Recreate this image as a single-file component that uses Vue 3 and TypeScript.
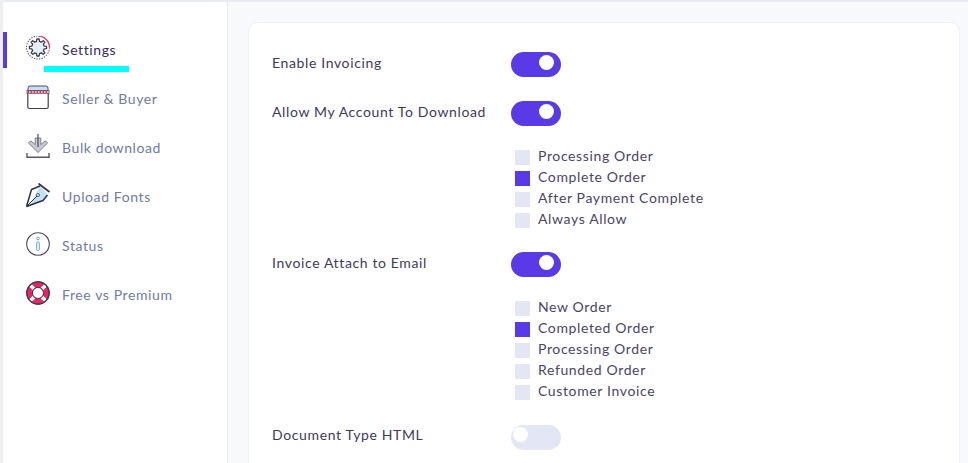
<template>
  <div class="page">
    <aside class="sidebar">
      <nav class="menu">
        <a v-for="item in menu" :key="item.key" class="menu-item" :class="{ active: item.key === 'settings' }">
          <span class="menu-icon">
            <svg v-if="item.key === 'settings'" viewBox="0 0 26 26" width="26" height="26">
              <circle cx="12" cy="11.5" r="11.5" fill="none" stroke="#55566a" stroke-width="1.1" stroke-dasharray="1.3 1.3" />
              <path d="M12 0A11.5 11.5 0 0 1 23.5 11.5" fill="none" stroke="#e8315f" stroke-width="1.2" />
              <circle cx="12" cy="11.5" r="6" fill="#e6eefb" />
              <path :d="gearPath" fill="none" stroke="#3b3b4f" stroke-width="1.3" stroke-linejoin="round" />
            </svg>
            <svg v-else-if="item.key === 'seller'" viewBox="0 0 26 26" width="26" height="26">
              <path d="M1.8 7V22a1.5 1.5 0 0 0 1.5 1.5h17.4a1.5 1.5 0 0 0 1.5-1.5V7" fill="#fff" stroke="#3f4053" stroke-width="1.2" />
              <path d="M2 5.5V3A2 2 0 0 1 4 1h16a2 2 0 0 1 2 2v2.5z" fill="#cddbf6" stroke="#3f4053" stroke-width="0.9" />
              <rect x="1" y="5.5" width="22" height="3.2" fill="#fff" stroke="#3f4053" stroke-width="0.7" />
              <path d="M1.4 7.1h21.2" stroke="#e8315f" stroke-width="2" stroke-dasharray="2 1" />
            </svg>
            <svg v-else-if="item.key === 'bulk'" viewBox="0 0 26 26" width="26" height="26">
              <path d="M9.2 4v6.5L4.6 6.8 2.4 9 12 18.5 21.6 9l-2.2-2.2-4.6 3.7V4z" fill="#c6c9d2" stroke="#6a6b7a" stroke-width="0.8" stroke-linejoin="round" />
              <path d="M12 0v13" stroke="#4a4a58" stroke-width="1.2" fill="none" />
              <path d="M1 19v4.3H23V19" fill="none" stroke="#55566a" stroke-width="1.4" />
            </svg>
            <svg v-else-if="item.key === 'fonts'" viewBox="0 0 26 26" width="26" height="26">
              <path d="M0.5 23.5 5 7 14 3l7.5 9-4.5 6z" fill="#fff" />
              <path d="M14 3 21.5 12 17 17.5 4 22.5z" fill="#bfe2f7" />
              <path d="M0.5 23.5 5.5 6.5 14 3M21.5 12 17 17.5.5 23.5" fill="none" stroke="#2f3044" stroke-width="1.5" stroke-linejoin="round" />
              <path d="M12.5 0.5 23.5 9" stroke="#2f3044" stroke-width="1.6" />
              <path d="M0.5 23.5 11 13" stroke="#2f3044" stroke-width="1" />
              <circle cx="12" cy="12" r="1.5" fill="#fff" stroke="#2f3044" stroke-width="0.8" />
            </svg>
            <svg v-else-if="item.key === 'status'" viewBox="0 0 26 26" width="26" height="26">
              <circle cx="12" cy="12" r="11.3" fill="#fff" stroke="#4a4c60" stroke-width="1.1" />
              <circle cx="12" cy="6.5" r="1.3" fill="#fff" stroke="#6d9bf0" stroke-width="1" />
              <rect x="10.7" y="10" width="2.6" height="8.5" rx="1" fill="#fff" stroke="#6d9bf0" stroke-width="1" />
            </svg>
            <svg v-else viewBox="0 0 26 26" width="26" height="26">
              <circle cx="12" cy="12" r="11.2" fill="#f5215f" stroke="#3f4053" stroke-width="1.2" />
              <path d="M4.6 4.6 8.6 8.6M19.4 4.6l-4 4M4.6 19.4l4-4M19.4 19.4l-4-4" stroke="#fff" stroke-width="3.6" />
              <circle cx="12" cy="12" r="11.2" fill="none" stroke="#3f4053" stroke-width="1.2" />
              <circle cx="12" cy="12" r="5.6" fill="#fff" stroke="#3f4053" stroke-width="1.1" />
            </svg>
          </span>
          <span class="menu-label">{{ item.label }}</span>
        </a>
      </nav>
      <div class="marker"></div>
    </aside>
    <main class="content">
      <section class="card">
        <template v-for="group in settings" :key="group.label">
          <div class="row">
            <label class="row-label">{{ group.label }}</label>
            <span class="toggle" :class="{ on: group.on }"><i></i></span>
          </div>
          <ul v-if="group.options" class="options">
            <li v-for="opt in group.options" :key="opt.label">
              <span class="box" :class="{ checked: opt.checked }"></span>{{ opt.label }}
            </li>
          </ul>
        </template>
      </section>
    </main>
  </div>
</template>

<script setup lang="ts">
interface Option {
  label: string
  checked?: boolean
}

interface Group {
  label: string
  on: boolean
  options?: Option[]
}

const menu = [
  { key: 'settings', label: 'Settings' },
  { key: 'seller', label: 'Seller & Buyer' },
  { key: 'bulk', label: 'Bulk download' },
  { key: 'fonts', label: 'Upload Fonts' },
  { key: 'status', label: 'Status' },
  { key: 'premium', label: 'Free vs Premium' }
]

const settings: Group[] = [
  { label: 'Enable Invoicing', on: true },
  {
    label: 'Allow My Account To Download',
    on: true,
    options: [
      { label: 'Processing Order' },
      { label: 'Complete Order', checked: true },
      { label: 'After Payment Complete' },
      { label: 'Always Allow' }
    ]
  },
  {
    label: 'Invoice Attach to Email',
    on: true,
    options: [
      { label: 'New Order' },
      { label: 'Completed Order', checked: true },
      { label: 'Processing Order' },
      { label: 'Refunded Order' },
      { label: 'Customer Invoice' }
    ]
  },
  { label: 'Document Type HTML', on: false }
]

// 8 teeth gear outline
function buildGear(cx: number, cy: number, outer: number, inner: number, teeth: number): string {
  const pts: string[] = []
  const step = (Math.PI * 2) / teeth
  for (let i = 0; i < teeth; i++) {
    const a = i * step
    const list: [number, number][] = [
      [inner, a - step * 0.3],
      [outer, a - step * 0.17],
      [outer, a + step * 0.17],
      [inner, a + step * 0.3]
    ]
    for (const [r, t] of list) {
      pts.push(`${(cx + r * Math.sin(t)).toFixed(2)} ${(cy - r * Math.cos(t)).toFixed(2)}`)
    }
  }
  return 'M' + pts.join('L') + 'Z'
}

const gearPath = buildGear(12, 11.5, 8.6, 6.3, 8)
</script>

<style>
html,
body {
  margin: 0;
  height: 100%;
  overflow: hidden;
  background: #f8f9fd;
}
</style>

<style scoped>
.page {
  display: flex;
  height: 463px;
  overflow: hidden;
  font-family: "Lato", sans-serif;
  border-top: 2px solid #e9ebf5;
  box-sizing: border-box;
  border-left: 3px solid #eeeeee;
  background: #f8f9fd;
}

.sidebar {
  position: relative;
  width: 225px;
  flex: none;
  background: #fff;
  border-right: 1px solid #e9ebf5;
  padding-top: 30px;
  box-sizing: border-box;
}

.menu {
  display: flex;
  flex-direction: column;
  gap: 13px;
}

.menu-item {
  display: flex;
  align-items: center;
  height: 36px;
  padding-left: 19px;
  border-left: 4px solid transparent;
  color: #6f7ba8;
  font-size: 14px;
  letter-spacing: 0.6px;
}

.menu-item.active {
  border-left-color: #5a3ae6;
  color: #352c63;
}

.menu-icon {
  display: block;
  width: 26px;
  height: 26px;
  margin-right: 10px;
  margin-top: -2px;
}

.menu-label {
  line-height: 20px;
}

.marker {
  position: absolute;
  left: 41px;
  top: 64px;
  width: 85px;
  height: 6px;
  background: #00ffff;
}

.content {
  flex: 1;
  padding: 20px 8px 0 20px;
  min-width: 0;
}

.card {
  background: #fff;
  border: 1px solid #eff1fa;
  border-radius: 10px;
  padding: 29px 22px 60px 23px;
  height: 600px;
  box-sizing: border-box;
}

.row {
  display: flex;
  align-items: center;
  height: 25px;
  margin-bottom: 24px;
}

.row-label {
  width: 239px;
  flex: none;
  margin-top: -5px;
  color: #3e3a5c;
  font-size: 14px;
  letter-spacing: 0.63px;
}

.toggle {
  position: relative;
  display: block;
  width: 50px;
  height: 25px;
  border-radius: 13px;
  background: #e3e6f5;
}

.toggle i {
  position: absolute;
  left: 2px;
  top: 2px;
  width: 15px;
  height: 15px;
  border-radius: 50%;
  background: #fff;
}

.toggle.on {
  background: #5a3ae6;
}

.toggle.on i {
  left: 28px;
  top: 3px;
}

.options {
  list-style: none;
  margin: -5px 0 23.4px;
  padding: 0 0 0 243px;
}

.options li {
  display: flex;
  align-items: center;
  height: 21px;
  color: #4a4568;
  font-size: 14px;
  letter-spacing: 0.63px;
}

.box {
  flex: none;
  width: 15px;
  height: 15px;
  margin-right: 8px;
  margin-top: 3px;
  background: #e3e6f5;
}

.box.checked {
  background: #5a3ae6;
}
</style>
